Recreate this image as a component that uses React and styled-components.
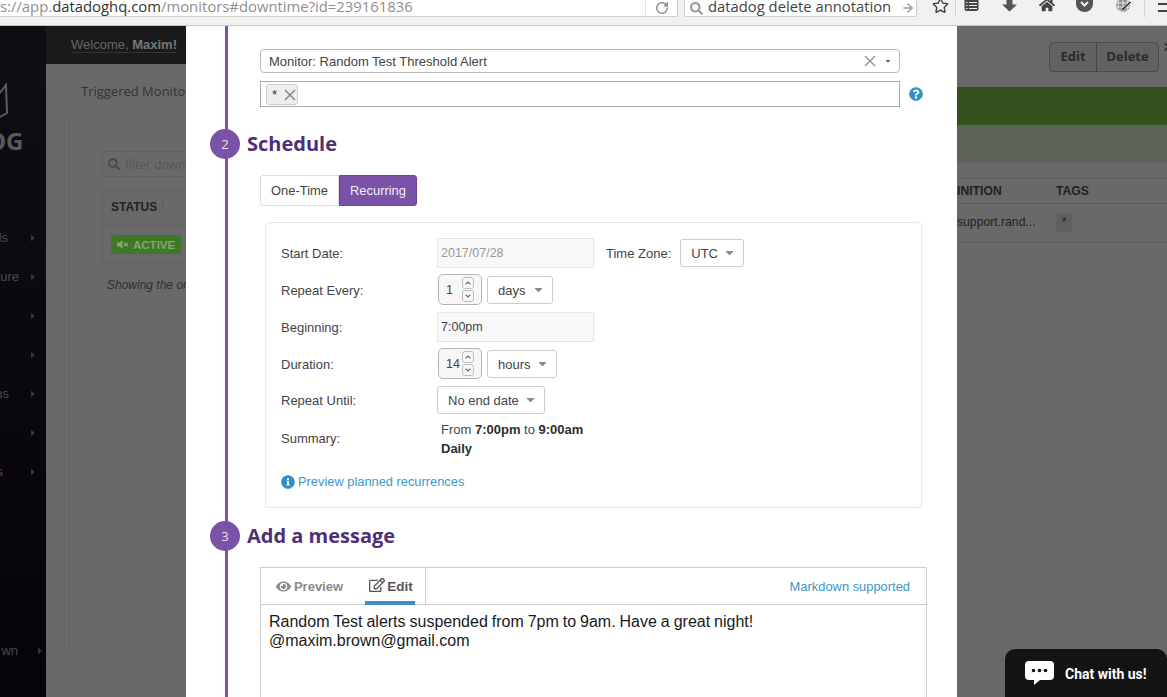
import React from "react";
import styled, { createGlobalStyle } from "styled-components";
import {
  FaSearch,
  FaRegStar,
  FaHome,
  FaQuestionCircle,
  FaInfoCircle,
  FaEye,
  FaRegEdit,
  FaVolumeMute,
  FaCaretRight,
  FaCaretDown,
  FaChevronUp,
  FaChevronDown,
} from "react-icons/fa";
import { RotateCw, ArrowRight } from "lucide-react";

const navItems = [
  { label: "ds", end: 8 },
  { label: "ure", end: 19 },
  { label: "", end: 8 },
  { label: "", end: 8 },
  { label: "ns", end: 9 },
  { label: "", end: 8 },
  { label: "s", end: 3 },
];

const Cross = ({ size, color }) => (
  <svg width={size} height={size} viewBox="0 0 12 12">
    <path d="M1 1l10 10M11 1L1 11" fill="none" stroke={color} strokeWidth="1.500" />
  </svg>
);

const App = () => {
  return (
    <Screen>
      <GlobalStyle />
      <BrowserBar>
        <UrlBox>
          <UrlText>
            s://app.<b>datadoghq.com</b>/monitors#downtime?id=239161836
          </UrlText>
          <ReloadCell>
            <RotateCw size={14} strokeWidth={2.5} />
          </ReloadCell>
        </UrlBox>
        <SearchBox>
          <FaSearch size={13} color="#9a9a9a" />
          <SearchText>datadog delete annotation</SearchText>
          <ArrowRight size={14} color="#9a9a9a" strokeWidth={2.5} />
        </SearchBox>
        <ToolIcon $width={38} $shift={8}>
          <FaRegStar size={17} />
        </ToolIcon>
        <ToolDivider />
        <ToolIcon $width={30}>
          <svg width="15" height="15" viewBox="0 0 15 15">
            <rect x="0.500" y="1" width="14" height="13" rx="2.500" fill="#444" />
            <path d="M5 5.500h8M5 8.500h8M5 11.500h8M2 5.500h1.500M2 8.500h1.500M2 11.500h1.500" stroke="#f2f1ef" strokeWidth="1.200" />
          </svg>
        </ToolIcon>
        <ToolIcon $width={46}>
          <svg width="15" height="15" viewBox="0 0 15 15">
            <path d="M4.500 0h6v7.500h4.500l-7.500 7-7.500-7h4.500z" fill="#555" />
          </svg>
        </ToolIcon>
        <ToolIcon $width={30}>
          <FaHome size={16} />
        </ToolIcon>
        <ToolIcon $width={44}>
          <svg width="17" height="15" viewBox="0 0 17 15">
            <path d="M1 0h15a1 1 0 0 1 1 1v6a8.500 8 0 0 1-17 0V1a1 1 0 0 1 1-1z" fill="#555" />
            <path d="M5 5l3.500 3.500L12 5" fill="none" stroke="#f2f1ef" strokeWidth="2" />
          </svg>
        </ToolIcon>
        <ToolIcon $width={34}>
          <svg width="17" height="16" viewBox="0 0 17 16">
            <circle cx="8" cy="8" r="7" fill="#8a8a8a" />
            <path d="M1 6h14M1 10h14M8 1v14M4.500 2c-2 3.500-2 8.500 0 12M11.500 2c2 3.500 2 8.500 0 12" fill="none" stroke="#f2f1ef" strokeWidth="0.900" />
            <path d="M15 4l1.500 1.500-8 8-3 1 1-3z" fill="#444" stroke="#f2f1ef" strokeWidth="0.800" />
          </svg>
        </ToolIcon>
        <ToolDivider $left={4} />
        <Hamburger />
      </BrowserBar>

      <Page>
        <Sidebar>
          <LogoMark>
            <svg width="8" height="36" viewBox="0 0 8 36">
              <path d="M0 10L6 2l1 28-7 4" fill="none" stroke="#5c5c5c" strokeWidth="2" />
            </svg>
          </LogoMark>
          <LogoText>OG</LogoText>
          <NavList>
            {navItems.map((item, i) => (
              <NavItem key={i}>
                <NavLabel $end={item.end}>{item.label}</NavLabel>
                <FaCaretRight size={10} />
              </NavItem>
            ))}
          </NavList>
          <BottomNav>
            <NavLabel $end={18}>wn</NavLabel>
            <FaCaretRight size={10} />
          </BottomNav>
        </Sidebar>

        <LeftPane>
          <Header>
            <Welcome>
              Welcome, <b>Maxim!</b>
            </Welcome>
          </Header>
          <TabStrip>Triggered Monitors</TabStrip>
          <LeftBody>
            <FilterBox>
              <FaSearch size={12} color="#4a4a4a" />
              <span>filter downtimes</span>
            </FilterBox>
            <StatusTable>
              <StatusHead>
                STATUS <sup>↑</sup>
              </StatusHead>
              <StatusRow>
                <ActiveBadge>
                  <FaVolumeMute size={11} />
                  ACTIVE
                </ActiveBadge>
              </StatusRow>
            </StatusTable>
            <ShowingText>Showing the only downtime</ShowingText>
          </LeftBody>
        </LeftPane>

        <RightPane>
          <ActionBar>
            <ActionGroup>
              <ActionButton $width={46}>Edit</ActionButton>
              <ActionButton $width={61}>Delete</ActionButton>
            </ActionGroup>
            <CloseMark>×</CloseMark>
          </ActionBar>
          <GreenBand />
          <PaleBand />
          <RightTable>
            <RightRow $head>
              <RightCell>INITION</RightCell>
              <RightCell>TAGS</RightCell>
            </RightRow>
            <RightRow>
              <RightCell>support.rand...</RightCell>
              <RightCell>
                <MiniTag>*</MiniTag>
              </RightCell>
            </RightRow>
          </RightTable>
        </RightPane>
      </Page>

      <Modal>
        <Timeline>
          <Block>
            <SelectBox>
              <span>Monitor: Random Test Threshold Alert</span>
              <SelectEnd>
                <Cross size={12} color="#999" />
                <FaCaretDown size={8} color="#666" />
              </SelectEnd>
            </SelectBox>
            <TagRow>
              <TagInput>
                <Tag>
                  * <Cross size={12} color="#888" />
                </Tag>
              </TagInput>
              <FaQuestionCircle size={14} color="#2f8fc6" />
            </TagRow>
          </Block>

          <StepHeader $top={22}>
            <StepBadge>2</StepBadge>
            <StepTitle>Schedule</StepTitle>
          </StepHeader>
          <Block>
            <ModeTabs>
              <ModeTab $width={79}>One-Time</ModeTab>
              <ModeTab $width={78} $active>Recurring</ModeTab>
            </ModeTabs>
            <SchedulePanel>
              <FormRow>
                <FieldLabel>Start Date:</FieldLabel>
                <TextField $muted $width={157}>2017/07/28</TextField>
                <ZoneLabel>Time Zone:</ZoneLabel>
                <Dropdown $width={64} $height={28}>UTC</Dropdown>
              </FormRow>
              <FormRow>
                <FieldLabel>Repeat Every:</FieldLabel>
                <Spinner value="1" />
                <Dropdown $width={66} $height={28}>days</Dropdown>
              </FormRow>
              <FormRow>
                <FieldLabel>Beginning:</FieldLabel>
                <TextField $width={157}>7:00pm</TextField>
              </FormRow>
              <FormRow>
                <FieldLabel>Duration:</FieldLabel>
                <Spinner value="14" />
                <Dropdown $width={70} $height={28}>hours</Dropdown>
              </FormRow>
              <FormRow $height={35}>
                <FieldLabel>Repeat Until:</FieldLabel>
                <Dropdown $width={108} $height={28}>No end date</Dropdown>
              </FormRow>
              <FormRow $height={40}>
                <FieldLabel>Summary:</FieldLabel>
                <SummaryText>
                  From <b>7:00pm</b> to <b>9:00am</b>
                  <br />
                  <b>Daily</b>
                </SummaryText>
              </FormRow>
              <PreviewLink>
                <FaInfoCircle size={14} color="#2f8fc6" />
                Preview planned recurrences
              </PreviewLink>
            </SchedulePanel>
          </Block>

          <StepHeader $top={13}>
            <StepBadge>3</StepBadge>
            <StepTitle>Add a message</StepTitle>
          </StepHeader>
          <Block>
            <Editor>
              <EditorHead>
                <EditorTab>
                  <FaEye size={15} />
                  Preview
                </EditorTab>
                <EditorTab $active>
                  <FaRegEdit size={16} />
                  Edit
                </EditorTab>
                <MarkdownLink>Markdown supported</MarkdownLink>
              </EditorHead>
              <EditorBody>
                Random Test alerts suspended from 7pm to 9am. Have a great night!
                <br />
                @maxim.brown@gmail.com
              </EditorBody>
            </Editor>
          </Block>
        </Timeline>
      </Modal>

      <ChatWidget>
        <svg width="29" height="24" viewBox="0 0 29 24">
          <path
            d="M4 0h21a4 4 0 0 1 4 4v11a4 4 0 0 1-4 4H15l-6 5 0-5H4a4 4 0 0 1-4-4V4a4 4 0 0 1 4-4z"
            fill="#fff"
          />
          <circle cx="8.500" cy="9.500" r="1.800" fill="#141414" />
          <circle cx="14.500" cy="9.500" r="1.800" fill="#141414" />
          <circle cx="20.500" cy="9.500" r="1.800" fill="#141414" />
        </svg>
        Chat with us!
      </ChatWidget>
    </Screen>
  );
};

const Spinner = ({ value }) => (
  <SpinBox>
    <span>{value}</span>
    <SpinArrows>
      <SpinArrow>
        <FaChevronUp size={6} />
      </SpinArrow>
      <SpinArrow>
        <FaChevronDown size={6} />
      </SpinArrow>
    </SpinArrows>
  </SpinBox>
);

const GlobalStyle = createGlobalStyle`
  html, body {
    margin: 0;
    height: 100%;
    overflow: hidden;
    background: #696969;
    font-family: "Liberation Sans", Arial, sans-serif;
  }
`;

const Screen = styled.div`
  position: relative;
  width: 1167px;
  height: 697px;
  overflow: hidden;
`;

const BrowserBar = styled.div`
  display: flex;
  align-items: flex-start;
  height: 25px;
  background: #f2f1ef;
  border-bottom: 1px solid #c4c3c1;
  color: #555;
  overflow: hidden;

  > * {
    flex: none;
  }
`;

const UrlBox = styled.div`
  display: flex;
  width: 678px;
  height: 17px;
  background: #fff;
  border: 1px solid #cfcfcf;
  border-width: 0 1px 1px 0;
  border-radius: 0 0 2px 0;
  box-sizing: border-box;
  overflow: hidden;
`;

const UrlText = styled.div`
  width: 645px;
  margin-top: -5px;
  border-right: 1px solid #e2e2e2;
  font-family: "Open Sans", sans-serif;
  font-size: 14.850px;
  line-height: 22px;
  color: #8f8f8f;
  white-space: nowrap;
  overflow: hidden;

  b {
    font-weight: 400;
    color: #333;
  }
`;

const ReloadCell = styled.div`
  flex: 1;
  display: flex;
  align-items: center;
  justify-content: center;
  color: #8a8a8a;
`;

const SearchBox = styled.div`
  display: flex;
  align-items: center;
  gap: 5px;
  width: 233px;
  height: 17px;
  margin-left: 6px;
  padding: 0 1px 0 5px;
  box-sizing: border-box;
  background: #fff;
  border: 1px solid #cfcfcf;
  border-top: 0;
  border-radius: 0 0 2px 2px;
`;

const SearchText = styled.span`
  flex: 1;
  margin-top: -4px;
  font-family: "Open Sans", sans-serif;
  font-size: 14.800px;
  line-height: 18px;
  color: #444;
  white-space: nowrap;
`;

const ToolIcon = styled.div`
  display: flex;
  justify-content: center;
  width: ${(p) => p.$width}px;
  height: 17px;
  margin-top: -3px;
  padding-left: ${(p) => p.$shift || 0}px;
  box-sizing: border-box;
  color: #444;
`;

const ToolDivider = styled.div`
  width: 1px;
  height: 17px;
  margin-left: ${(p) => p.$left || 0}px;
  background: #d5d4d2;
`;

const Hamburger = styled.div`
  width: 12px;
  height: 9px;
  margin: 3px 0 0 13px;
  border-top: 2px solid #444;
  border-bottom: 2px solid #444;
  box-sizing: border-box;
`;

const Page = styled.div`
  display: flex;
  height: 671px;
`;

const Sidebar = styled.aside`
  flex: none;
  width: 46px;
  background: linear-gradient(#100e12, #050307);
  color: #4c4b4e;
  overflow: hidden;
`;

const LogoMark = styled.div`
  height: 36px;
  margin-top: 57px;
`;

const LogoText = styled.div`
  height: 40px;
  margin: 4px 0 0 -13px;
  font-family: "Open Sans", sans-serif;
  font-size: 24px;
  font-weight: 700;
  line-height: 36px;
  color: #5a5a5a;
`;

const NavList = styled.nav`
  margin-top: 55px;
`;

const NavItem = styled.div`
  display: flex;
  align-items: center;
  height: 39px;
  color: #3c3b3e;
`;

const NavLabel = styled.span`
  display: flex;
  justify-content: flex-end;
  width: ${(p) => p.$end}px;
  margin-right: ${(p) => 28 - p.$end}px;
  font-size: 13px;
  color: #4c4b4e;
  white-space: nowrap;
  overflow: hidden;
`;

const BottomNav = styled(NavItem)`
  margin-top: 140px;

  svg {
    margin-left: 7px;
  }
`;

const LeftPane = styled.section`
  flex: none;
  width: 140px;
  white-space: nowrap;
  overflow: hidden;
`;

const Header = styled.header`
  display: flex;
  align-items: center;
  height: 38px;
  padding-left: 25px;
  background: #1a1a1a;
`;

const Welcome = styled.span`
  font-size: 13px;
  color: #666;
  border-bottom: 1px solid #333;

  b {
    color: #777;
  }
`;

const TabStrip = styled.div`
  height: 56px;
  padding: 18px 0 0 35px;
  box-sizing: border-box;
  font-family: "Open Sans", sans-serif;
  font-size: 13px;
  color: #333;
  border-bottom: 1px solid #646464;
`;

const LeftBody = styled.div`
  height: 500px;
  margin-left: 23px;
  padding: 31px 0 0 32px;
  border-left: 1px solid #626262;
`;

const FilterBox = styled.div`
  display: flex;
  align-items: center;
  gap: 5px;
  height: 24px;
  padding-left: 5px;
  border: 1px solid #5f5f5f;
  border-right: 0;
  font-family: "Open Sans", sans-serif;
  font-size: 12px;
  color: #555;

  svg {
    flex: none;
  }
`;

const StatusTable = styled.div`
  margin-top: 13px;
  border: 1px solid #626262;
  border-right: 0;
`;

const StatusHead = styled.div`
  height: 35px;
  padding-left: 8px;
  box-sizing: border-box;
  border-bottom: 1px solid #626262;
  font-size: 12px;
  font-weight: 700;
  line-height: 32px;
  color: #222;

  sup {
    font-size: 8px;
    font-weight: 400;
    line-height: 0;
    color: #444;
  }
`;

const StatusRow = styled.div`
  height: 36px;
  padding: 9px 0 0 8px;
  box-sizing: border-box;
`;

const ActiveBadge = styled.span`
  display: inline-flex;
  align-items: center;
  gap: 5px;
  width: 70px;
  height: 19px;
  padding-left: 6px;
  box-sizing: border-box;
  background: #3e7a26;
  border-radius: 3px;
  font-size: 11.500px;
  font-weight: 700;
  color: #84a674;

  svg {
    flex: none;
  }
`;

const ShowingText = styled.p`
  margin: 15px 0 0 5px;
  font-size: 12px;
  font-style: italic;
  color: #2f2f2f;
`;

const RightPane = styled.section`
  flex: none;
  width: 210px;
  margin-left: auto;
`;

const ActionBar = styled.div`
  display: flex;
  justify-content: flex-end;
  height: 61px;
  padding-top: 16px;
  box-sizing: border-box;
`;

const ActionGroup = styled.div`
  display: flex;
  height: 28px;
  margin-right: 4px;
  border: 1px solid #4c4c4c;
  border-radius: 4px;
  background: #626262;
`;

const ActionButton = styled.div`
  width: ${(p) => p.$width}px;
  text-align: center;
  font-family: "Open Sans", sans-serif;
  font-size: 13px;
  font-weight: 700;
  line-height: 27px;
  color: #2a2a2a;

  & + & {
    border-left: 1px solid #464646;
  }
`;

const CloseMark = styled.span`
  width: 7px;
  margin: -4px -3px 0 0;
  font-size: 18px;
  line-height: 18px;
  color: #222;
  overflow: hidden;
`;

const GreenBand = styled.div`
  height: 38px;
  background: #34501c;
`;

const PaleBand = styled.div`
  height: 37px;
  background: #5c6455;
`;

const RightTable = styled.div`
  margin-top: 16px;
  border-top: 1px solid #5c5c5c;
`;

const RightRow = styled.div`
  display: grid;
  grid-template-columns: 99px 1fr;
  align-items: center;
  height: ${(p) => (p.$head ? 25 : 39)}px;
  padding-bottom: ${(p) => (p.$head ? 0 : 2)}px;
  box-sizing: border-box;
  border-bottom: 1px solid #5c5c5c;
  font-size: 12.200px;
  font-weight: ${(p) => (p.$head ? 700 : 400)};
  color: #222;
`;

const RightCell = styled.div`
  white-space: nowrap;
`;

const MiniTag = styled.span`
  display: block;
  width: 16px;
  height: 19px;
  text-align: center;
  line-height: 17px;
  background: #5f5f5f;
  border: 1px solid #626262;
  border-radius: 3px;
  box-sizing: border-box;
`;

const Modal = styled.div`
  position: absolute;
  top: 26px;
  left: 186px;
  width: 771px;
  height: 671px;
  padding-left: 39px;
  box-sizing: border-box;
  background: #fff;
  overflow: hidden;
`;

const Timeline = styled.div`
  width: 700px;
  min-height: 800px;
  padding-top: 23px;
  box-sizing: border-box;
  border-left: 3px solid #7a52a8;
`;

const Block = styled.div`
  margin-left: 32px;
`;

const SelectBox = styled.div`
  display: flex;
  align-items: center;
  justify-content: space-between;
  width: 640px;
  height: 24px;
  padding: 0 7px 0 8px;
  box-sizing: border-box;
  border: 1px solid #b8b8b8;
  border-radius: 4px;
  font-size: 13px;
  color: #444;
`;

const SelectEnd = styled.span`
  display: flex;
  align-items: center;
  gap: 8px;
`;

const TagRow = styled.div`
  display: flex;
  align-items: center;
  gap: 9px;
  margin-top: 8px;
`;

const TagInput = styled.div`
  width: 640px;
  height: 26px;
  padding: 2px 5px;
  box-sizing: border-box;
  border: 1px solid #aaa;
`;

const Tag = styled.span`
  display: inline-flex;
  align-items: center;
  justify-content: space-between;
  width: 32px;
  height: 21px;
  padding: 0 1px 0 5px;
  box-sizing: border-box;
  background: #eee;
  border: 1px solid #ccc;
  border-radius: 3px;
  font-size: 13px;
  color: #333;
`;

const StepHeader = styled.div`
  position: relative;
  height: 30px;
  margin-top: ${(p) => p.$top}px;
  padding-left: 19px;
`;

const StepBadge = styled.span`
  position: absolute;
  top: 0;
  left: -18px;
  width: 30px;
  height: 30px;
  border-radius: 50%;
  background: #7a52a8;
  color: #e8e0f0;
  font-family: "Open Sans", sans-serif;
  font-size: 13px;
  line-height: 30px;
  text-align: center;
`;

const StepTitle = styled.h2`
  margin: 0;
  font-family: "Open Sans", sans-serif;
  font-size: 20px;
  font-weight: 700;
  line-height: 30px;
  color: #4f2f78;
`;

const ModeTabs = styled.div`
  display: flex;
  margin-top: 16px;
`;

const ModeTab = styled.div`
  width: ${(p) => p.$width}px;
  height: 31px;
  box-sizing: border-box;
  border: 1px solid ${(p) => (p.$active ? "#6a4497" : "#ddd")};
  border-radius: ${(p) => (p.$active ? "0 3px 3px 0" : "3px 0 0 3px")};
  background: ${(p) => (p.$active ? "#7a52a8" : "#fff")};
  color: ${(p) => (p.$active ? "#f2eef7" : "#444")};
  font-size: 12.900px;
  line-height: 29px;
  text-align: center;
`;

const SchedulePanel = styled.div`
  width: 657px;
  height: 286px;
  margin: 16px 0 0 5px;
  padding: 11px 0 0 15px;
  box-sizing: border-box;
  border: 1px solid #e8e8e8;
  border-radius: 4px;
`;

const FormRow = styled.div`
  display: flex;
  align-items: center;
  height: ${(p) => p.$height || 37}px;
`;

const FieldLabel = styled.label`
  flex: none;
  width: 156px;
  padding-top: 2px;
  font-size: 13px;
  color: #444;
`;

const TextField = styled.div`
  width: ${(p) => p.$width}px;
  height: 30px;
  padding-left: 3px;
  box-sizing: border-box;
  background: #f8f8f8;
  border: 1px solid #e6e6e6;
  font-size: 12.500px;
  line-height: 29px;
  color: ${(p) => (p.$muted ? "#999" : "#444")};
`;

const ZoneLabel = styled(FieldLabel)`
  width: auto;
  margin: 0 9px 0 12px;
`;

const DropdownBox = styled.div`
  display: flex;
  align-items: center;
  justify-content: space-between;
  width: ${(p) => p.$width}px;
  height: ${(p) => p.$height}px;
  padding: 2px 7px 0 10px;
  box-sizing: border-box;
  border: 1px solid #ccc;
  border-radius: 3px;
  font-size: 13px;
  color: #444;

  svg {
    margin-top: -3px;
  }
`;

const Dropdown = ({ children, ...rest }) => (
  <DropdownBox {...rest}>
    {children}
    <FaCaretDown size={13} color="#8a8a8a" />
  </DropdownBox>
);

const SpinBox = styled.div`
  display: flex;
  align-items: center;
  justify-content: space-between;
  width: 44px;
  height: 31px;
  margin: 0 5px 0 1px;
  padding: 0 8px 0 7px;
  box-sizing: border-box;
  background: #f7f7f7;
  border: 1px solid #b5b5b5;
  border-radius: 5px;
  font-size: 12.500px;
  color: #444;
`;

const SpinArrows = styled.div`
  display: flex;
  flex-direction: column;
  gap: 1px;
  margin-right: -1px;
`;

const SpinArrow = styled.span`
  display: flex;
  align-items: center;
  justify-content: center;
  width: 10px;
  height: 10px;
  border: 1px solid #bdbdbd;
  border-radius: 3px;
  color: #555;
`;

const SummaryText = styled.div`
  margin-left: 4px;
  padding-top: 4px;
  font-size: 13px;
  line-height: 19px;
  color: #444;

  b {
    color: #2e2e2e;
  }
`;

const PreviewLink = styled.div`
  display: flex;
  align-items: center;
  gap: 3px;
  margin-top: 17px;
  font-size: 12.850px;
  color: #3c98c9;
`;

const Editor = styled.div`
  width: 667px;
  height: 300px;
  margin-top: 16px;
  box-sizing: border-box;
  border: 1px solid #ccc;
`;

const EditorHead = styled.div`
  display: flex;
  align-items: stretch;
  height: 37px;
  padding-left: 4px;
  box-sizing: border-box;
  border-bottom: 1px solid #ccc;
`;

const EditorTab = styled.div`
  display: flex;
  align-items: center;
  justify-content: center;
  gap: ${(p) => (p.$active ? 2 : 3)}px;
  width: ${(p) => (p.$active ? 50 : 87)}px;
  height: 37px;
  margin-right: ${(p) => (p.$active ? 10 : 13)}px;
  padding-left: ${(p) => (p.$active ? 2 : 2)}px;
  padding-top: ${(p) => (p.$active ? 4 : 0)}px;
  box-sizing: border-box;
  border-bottom: ${(p) => (p.$active ? "4px solid #3e8ec4" : "0")};
  font-size: ${(p) => (p.$active ? 13.500 : 13)}px;
  font-weight: 700;
  color: ${(p) => (p.$active ? "#555" : "#8a8a8a")};

  svg {
    margin-top: ${(p) => (p.$active ? -4 : 0)}px;
  }
`;

const MarkdownLink = styled.span`
  flex: 1;
  padding-right: 16px;
  border-left: 1px solid #ccc;
  text-align: right;
  font-size: 12.900px;
  line-height: 38px;
  color: #3c98c9;
`;

const EditorBody = styled.div`
  padding: 7px 8px;
  font-size: 16px;
  word-spacing: -0.500px;
  line-height: 19px;
  color: #1a1a1a;
`;

const ChatWidget = styled.div`
  position: absolute;
  right: 0;
  bottom: 0;
  display: flex;
  align-items: flex-start;
  gap: 11px;
  width: 162px;
  height: 48px;
  padding: 12px 0 0 20px;
  box-sizing: border-box;
  background: #141414;
  border-radius: 10px 10px 0 0;
  font-family: Roboto, sans-serif;
  font-size: 14px;
  font-weight: 700;
  line-height: 27px;
  color: #fff;
`;

export default App;
